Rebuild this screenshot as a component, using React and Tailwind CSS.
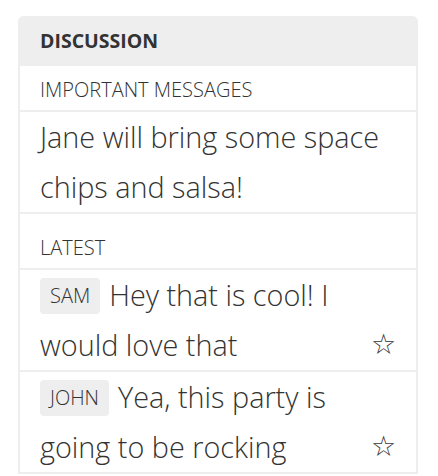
export default function App() {
  const messages = [
    { name: "SAM", text: "Hey that is cool! I would love that" },
    { name: "JOHN", text: "Yea, this party is going to be rocking" },
  ];

  return (
    <div className="min-h-screen bg-white pt-4 pl-[18px] text-[#333]" style={{ fontFamily: '"Open Sans", sans-serif' }}>
      <div className="w-[400px] rounded-t-md border-x-2 border-[#eee]">
        <div className="-mx-[2px] h-[50px] rounded-t-md bg-[#eee] pl-[22px] pt-[12px] text-[19.5px] font-bold leading-[26px]">
          DISCUSSION
        </div>
        <div className="h-[46px] border-b-2 border-[#eee] px-5 pt-[12px] text-[20px] font-light leading-[24px]">
          IMPORTANT MESSAGES
        </div>
        <div className="border-b-2 border-[#eee] px-5 text-[28.8px] font-light leading-[50px]">
          Jane will bring some space chips and salsa!
        </div>
        <div className="h-[56px] border-b-2 border-[#eee] px-5 pt-[22px] text-[20px] font-light leading-[24px]">
          LATEST
        </div>
        {messages.map((m) => (
          <div key={m.name} className="flex items-end border-b-2 border-[#eee] px-5">
            <div className="flex-1 text-[28.8px] font-light leading-[50px]">
              <span className="mr-[9px] inline-block rounded-[4px] bg-[#eee] px-[10px] align-[3px] text-[20px] leading-[36px]">
                {m.name}
              </span>
              {m.text}
            </div>
            <span className="mb-[8px] text-[28px] leading-[34px]" style={{ fontFamily: '"DejaVu Sans", sans-serif' }}>
              ☆
            </span>
          </div>
        ))}
      </div>
    </div>
  );
}
